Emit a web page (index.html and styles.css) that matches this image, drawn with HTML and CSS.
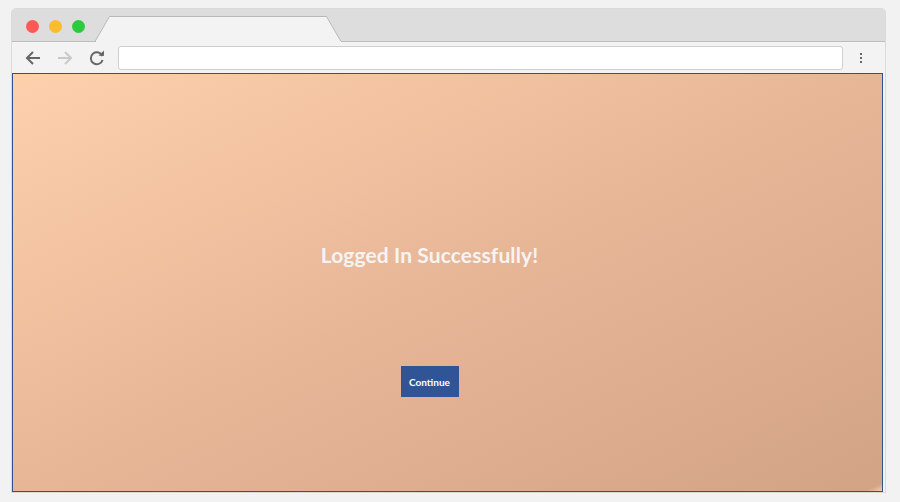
FILE: index.html
```html
<!DOCTYPE html>
<html>
<head>
<meta charset="utf-8">
<link rel="stylesheet" href="styles.css">
</head>
<body>
<div class="window">
  <div class="tabbar">
    <div class="lights">
      <span class="light red"></span>
      <span class="light yellow"></span>
      <span class="light green"></span>
    </div>
    <svg class="tab" width="247" height="26" viewBox="0 0 247 26">
      <path d="M0 25.5 L14.5 0.5 L231.5 0.5 L246 25.5 Z" fill="#f3f3f3" stroke="#b9b9b9" stroke-width="1"/>
      <rect x="1" y="25" width="245" height="2" fill="#f3f3f3"/>
    </svg>
  </div>
  <div class="toolbar">
    <svg class="nav" width="20" height="20" viewBox="0 0 20 20"><path d="M17 10H4M10 4L4 10L10 16" fill="none" stroke="#666" stroke-width="2"/></svg>
    <svg class="nav" width="20" height="20" viewBox="0 0 20 20"><path d="M3 10H16M10 4L16 10L10 16" fill="none" stroke="#c9c9c9" stroke-width="2"/></svg>
    <svg class="nav" width="20" height="20" viewBox="0 0 20 20"><path d="M15.5 8.2A6 6 0 1 0 15.6 12" fill="none" stroke="#666" stroke-width="2"/><path d="M11.5 7.8H17V2.5Z" fill="#666"/></svg>
    <div class="address"></div>
    <div class="menu"><span></span><span></span><span></span></div>
  </div>
  <div class="content">
    <h1 class="title">Logged In Successfully!</h1>
    <button class="btn">Continue</button>
  </div>
</div>
</body>
</html>
```
FILE: styles.css
```css
html, body {
  margin: 0;
  padding: 0;
  background: #f2f2f2;
  width: 900px;
  height: 502px;
  overflow: hidden;
}
.window {
  margin: 9px 0 0 12px;
  width: 873px;
  height: 483px;
  display: flex;
  flex-direction: column;
  border-radius: 4px 4px 0 0;
  background: #f3f3f3;
  box-shadow: 0 0 0 1px #dadada;
}
.tabbar {
  background: #dddddd;
  border-radius: 4px 4px 0 0;
  border-bottom: 1px solid #bdbdbd;
  display: flex;
  align-items: flex-end;
  box-sizing: border-box;
  height: 33px;
}
.lights {
  display: flex;
  gap: 10px;
  padding-left: 14px;
  align-self: center;
  margin-top: 2px;
}
.light {
  width: 13px;
  height: 13px;
  border-radius: 50%;
  display: block;
}
.red { background: #fd5a55; }
.yellow { background: #fdbb2f; }
.green { background: #2ccb3f; }
.tab {
  display: block;
  margin-left: 10px;
  margin-bottom: -1px;
}
.toolbar {
  height: 31px;
  display: flex;
  align-items: center;
  background: #f3f3f3;
  padding: 0 0 0 11px;
}
.nav {
  display: block;
  margin-right: 12px;
}
.nav:nth-child(3) { margin-right: 11px; }
.address {
  width: 723px;
  height: 22px;
  background: #fff;
  border: 1px solid #cfcfcf;
  border-radius: 3px;
}
.menu {
  display: flex;
  flex-direction: column;
  gap: 2px;
  margin-left: 17px;
}
.menu span {
  width: 2px;
  height: 2px;
  background: #666;
  display: block;
}
.content {
  flex: 1;
  margin-right: 2px;
  border: 1.5px solid #2f528f;
  background: linear-gradient(to bottom right, #fed0ac 0%, #e7b697 50%, #d3a386 99%, #f5c9a9 100%);
  display: flex;
  flex-direction: column;
  align-items: center;
  padding-right: 36px;
  box-sizing: border-box;
}
.title {
  margin: 168px 0 0 0;
  font-family: Lato, "Open Sans", sans-serif;
  font-weight: 700;
  font-size: 21px;
  color: #f6f4f2;
  line-height: 26px;
  letter-spacing: 0.1px;
}
.btn {
  margin-top: 98px;
  width: 58px;
  height: 31px;
  background: #2f5597;
  color: #fff;
  border: none;
  font-family: Lato, sans-serif;
  font-weight: 700;
  font-size: 10px;
  padding: 0;
}
```
